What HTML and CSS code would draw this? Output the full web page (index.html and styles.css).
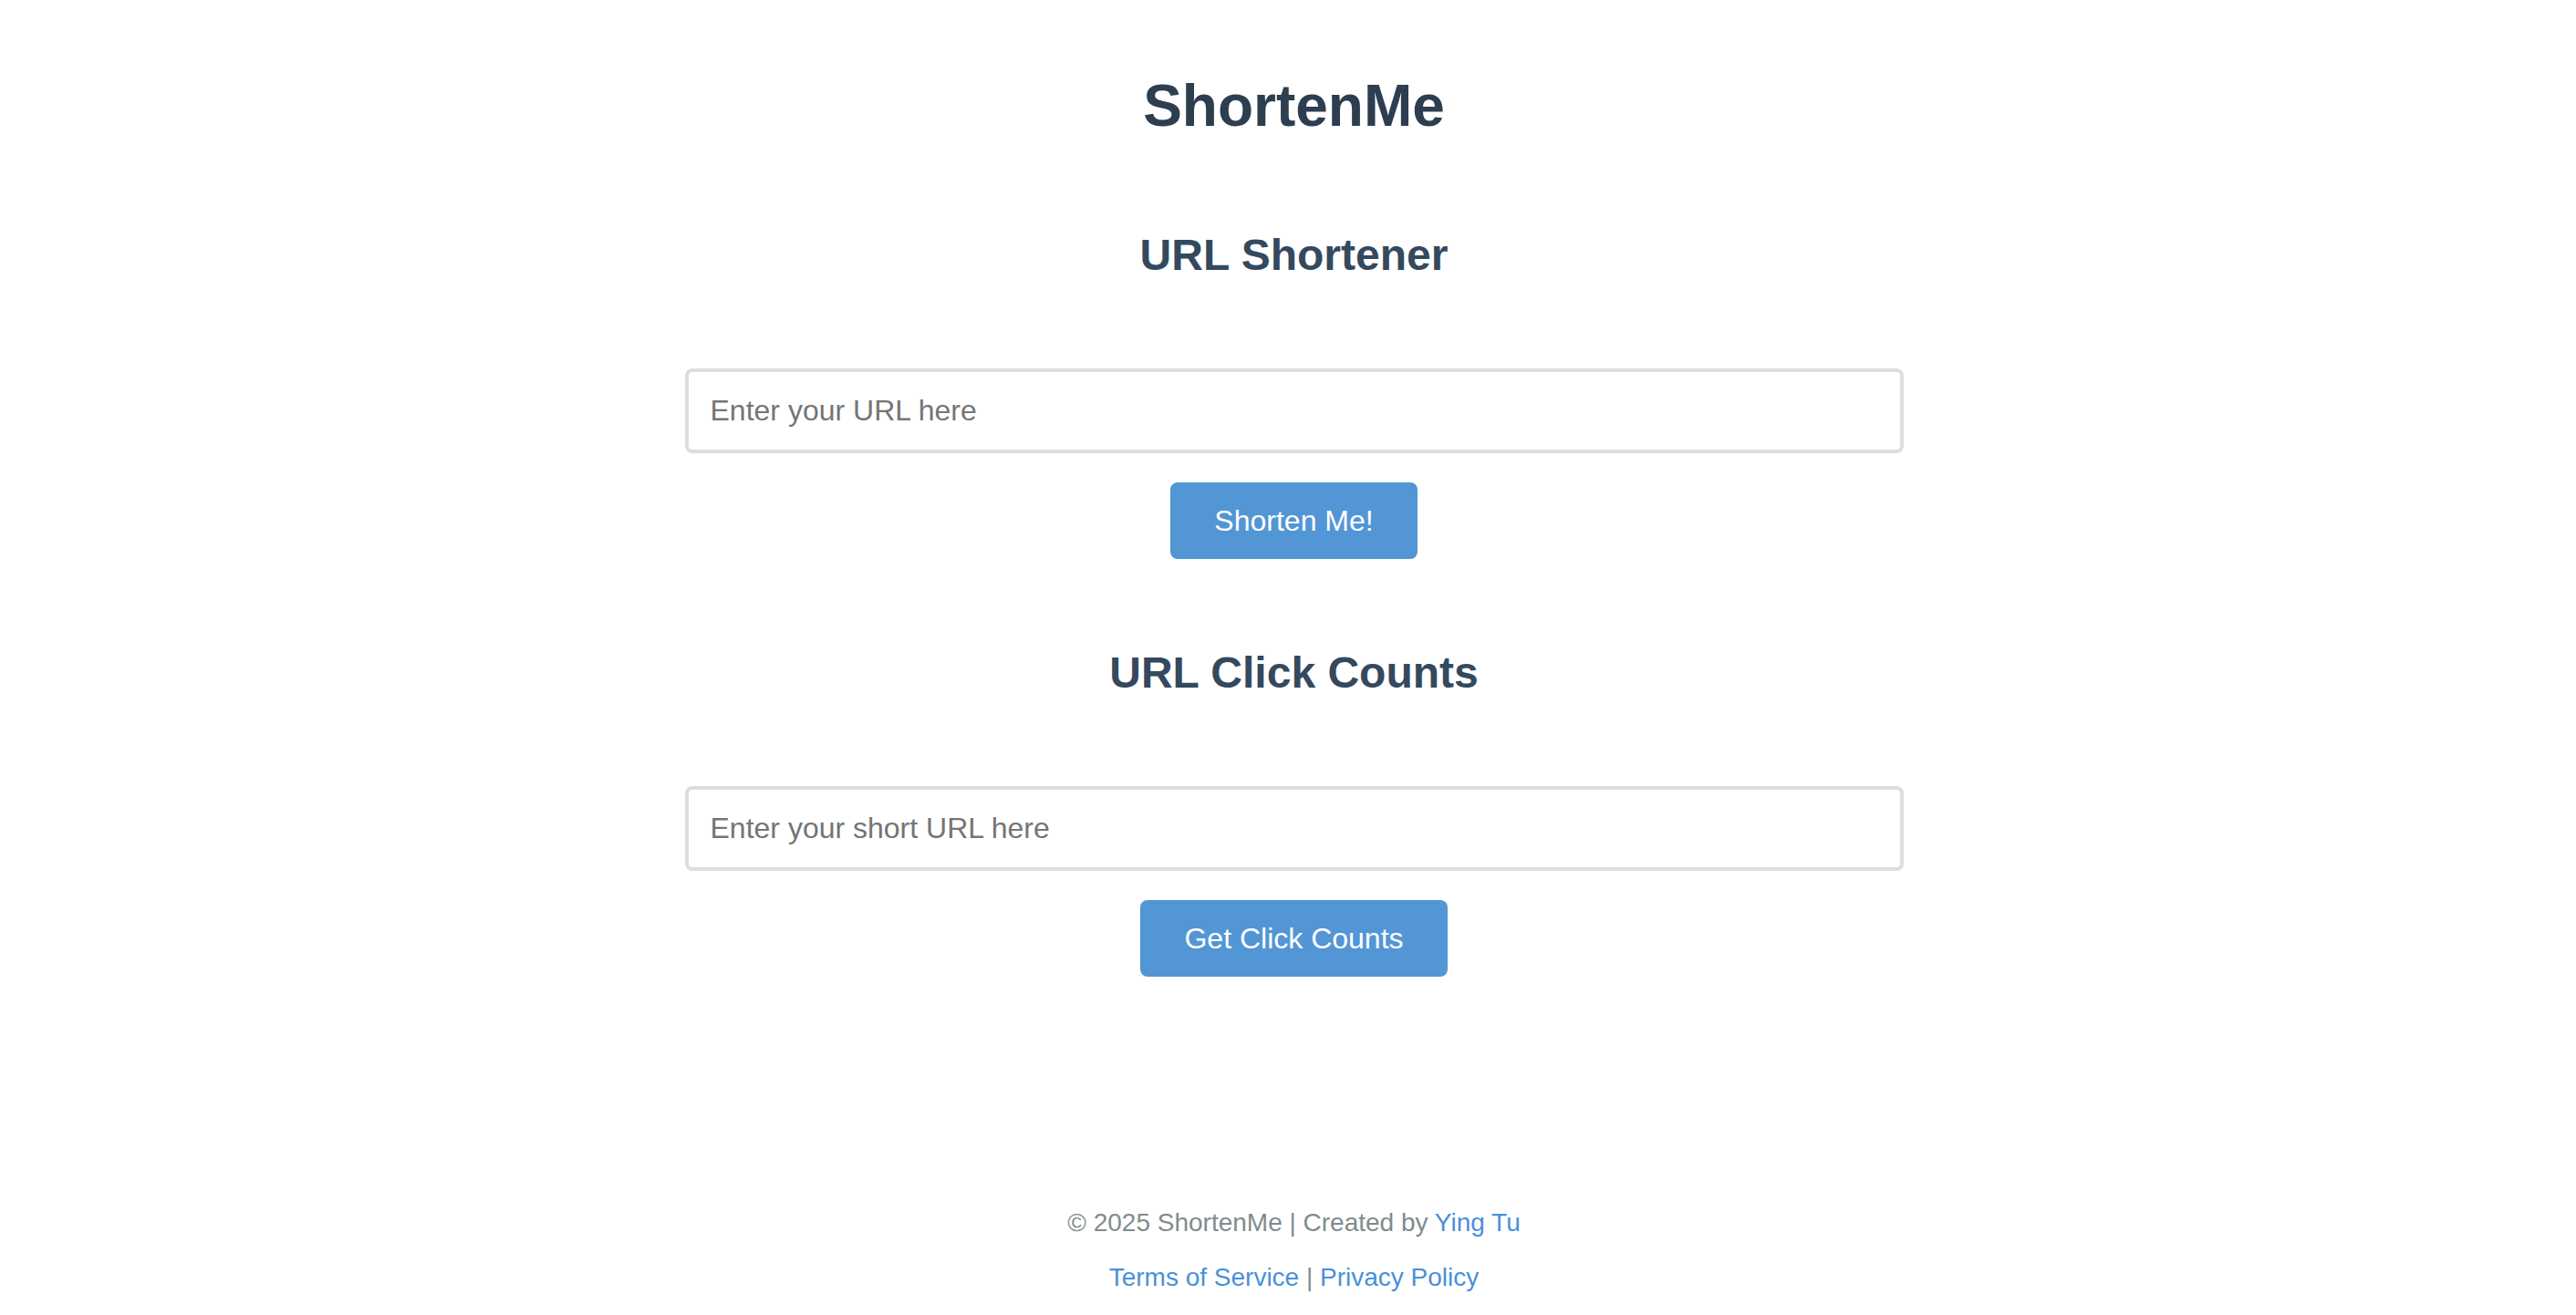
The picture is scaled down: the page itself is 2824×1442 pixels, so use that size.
FILE: index.html
```html
<!DOCTYPE html>
<html lang="en">
<head>
<meta charset="utf-8">
<title>ShortenMe</title>
<link rel="stylesheet" href="styles.css">
</head>
<body>
<div class="page">
  <main class="main">
    <h1 class="title">ShortenMe</h1>
    <section class="section">
      <h2 class="section-title">URL Shortener</h2>
      <input class="text-input" type="text" placeholder="Enter your URL here">
      <button class="btn" type="button">Shorten Me!</button>
    </section>
    <section class="section">
      <h2 class="section-title">URL Click Counts</h2>
      <input class="text-input" type="text" placeholder="Enter your short URL here">
      <button class="btn" type="button">Get Click Counts</button>
    </section>
  </main>
  <footer class="footer">
    <p class="footer-line">© 2025 ShortenMe | Created by <a class="link" href="#">Ying Tu</a></p>
    <p class="footer-line"><a class="link" href="#">Terms of Service</a> | <a class="link" href="#">Privacy Policy</a></p>
  </footer>
</div>
</body>
</html>
```
FILE: styles.css
```css
* { box-sizing: border-box; }
html, body { margin: 0; padding: 0; background: #ffffff; }
body {
  font-family: "Liberation Sans", Arial, Helvetica, sans-serif;
  padding-left: 13px;
}
.page {
  min-height: 1442px;
  display: flex;
  flex-direction: column;
  align-items: center;
}
.main {
  width: 1336px;
  display: flex;
  flex-direction: column;
  align-items: center;
  padding-top: 79px;
}
.title {
  margin: 0;
  font-size: 64px;
  line-height: 74px;
  font-weight: 700;
  color: #2c3e50;
}
.section {
  width: 100%;
  display: flex;
  flex-direction: column;
  align-items: center;
}
.section:first-of-type { margin-top: 99px; }
.section + .section { margin-top: 97px; }
.section-title {
  margin: 0 0 96px;
  font-size: 48px;
  line-height: 56px;
  font-weight: 700;
  color: #34495e;
}
.text-input {
  display: block;
  width: 100%;
  height: 93px;
  margin: 0;
  padding: 24px 24px;
  border: 4px solid #dddddd;
  border-radius: 8px;
  font-family: "Liberation Sans", Arial, Helvetica, sans-serif;
  font-size: 32px;
  line-height: 37px;
  color: #333333;
  background: #ffffff;
  outline: none;
}
.text-input::placeholder { color: #757575; }
.btn {
  margin-top: 32px;
  padding: 24px 48px;
  border: none;
  border-radius: 8px;
  background: #5296d5;
  color: #ffffff;
  font-family: "Liberation Sans", Arial, Helvetica, sans-serif;
  font-size: 32px;
  line-height: 36px;
  cursor: pointer;
}
.footer {
  margin-top: auto;
  padding-bottom: 25px;
  text-align: center;
  color: #7f8c8d;
  font-size: 28px;
  line-height: 32px;
}
.footer-line { margin: 0; }
.footer-line + .footer-line { margin-top: 28px; }
.link { color: #4a90d9; text-decoration: none; }
```
